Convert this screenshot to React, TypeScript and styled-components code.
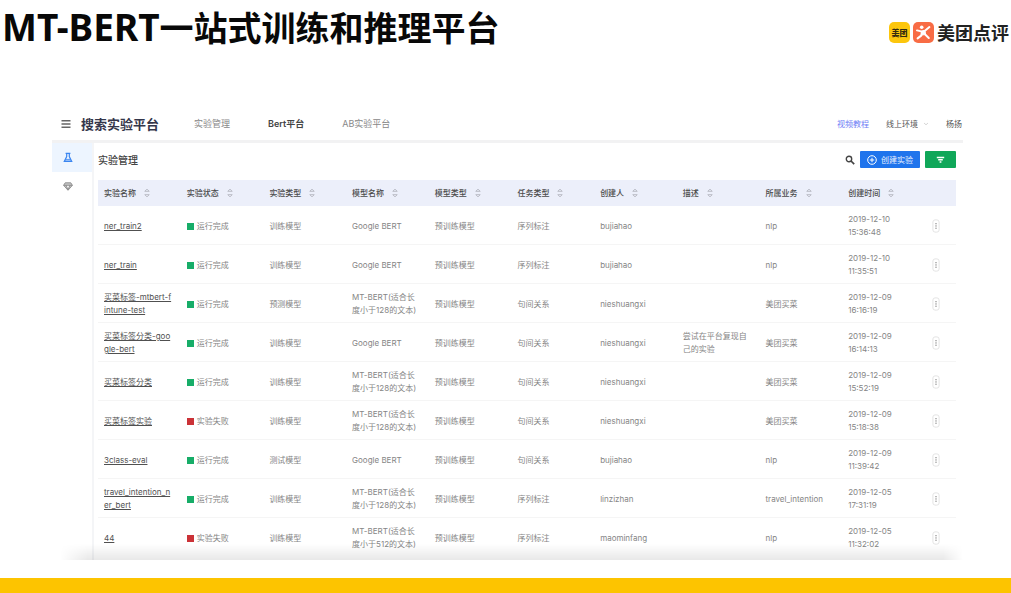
import React from "react";
import styled, { createGlobalStyle } from "styled-components";

const GlobalStyle = createGlobalStyle`
  *, *::before, *::after { box-sizing: border-box; }
  body { margin: 0; background: #fff; }
  a, button, select { font: inherit; color: inherit; }
  button { border: 0; padding: 0; background: none; cursor: pointer; }
`;

const Page = styled.div`
  display: flex;
  flex-direction: column;
  min-height: 100vh;
  font-family: Inter, "Noto Sans CJK SC", sans-serif;
`;

const SlideHeader = styled.header`
  display: flex;
  justify-content: space-between;
  align-items: flex-start;
  padding: 8px 2px 0 2px;
`;

const SlideTitle = styled.h1`
  margin: 0;
  font: 700 34px/40px "Noto Sans", "Noto Sans CJK SC", sans-serif;
  color: #080808;
  white-space: nowrap;
`;

const TitleLatin = styled.span`
  font-size: 37px;
  line-height: 34px;
`;

const Brand = styled.div`
  display: flex;
  align-items: center;
  gap: 3px;
  padding-top: 12px;
`;

const BrandBadge = styled.span<{ $color: string }>`
  display: flex;
  align-items: center;
  justify-content: center;
  width: 21px;
  height: 21px;
  border-radius: 5px;
  background: ${(p) => p.$color};
  color: #332a10;
  font: 900 8px/21px "Noto Sans CJK SC", sans-serif;
`;

const BrandName = styled.span`
  font: 700 18px/24px "Noto Sans CJK SC", sans-serif;
  color: #222;
`;

const Panel = styled.main`
  position: relative;
  margin: 57px 48px 18px 52px;
  &::after {
    content: "";
    position: absolute;
    left: 8px;
    right: 0;
    bottom: 0;
    height: 16px;
    pointer-events: none;
    background: linear-gradient(to bottom, rgba(0, 0, 0, 0), rgba(0, 0, 0, 0.09));
    mask-image: linear-gradient(to right, transparent, #000 28px, #000 calc(100% - 20px), transparent);
  }
`;

const TopBar = styled.header`
  display: flex;
  align-items: center;
  height: 38px;
  padding: 2px 1px 0 9px;
  border-bottom: 3px solid #f2f2f3;
`;

const MenuButton = styled.button`
  display: flex;
  margin-right: 10px;
  color: #666;
`;

const ProductName = styled.strong`
  font-size: 13px;
  line-height: 20px;
  font-weight: 700;
  color: #34364a;
`;

const Nav = styled.nav`
  display: flex;
  gap: 38px;
  margin-left: 35px;
`;

const NavLink = styled.a<{ $active?: boolean }>`
  font-size: 9px;
  line-height: 16px;
  font-weight: ${(p) => (p.$active ? 600 : 400)};
  color: ${(p) => (p.$active ? "#444" : "#888")};
  text-decoration: none;
`;

const Account = styled.div`
  display: flex;
  align-items: center;
  gap: 17px;
  margin-left: auto;
  font-size: 8px;
  line-height: 16px;
  color: #555;
`;

const TutorialLink = styled.a`
  color: #6d7cf5;
  text-decoration: none;
`;

const EnvPicker = styled.label`
  display: flex;
  align-items: center;
  gap: 5px;
`;

const EnvSelect = styled.select`
  appearance: none;
  border: 0;
  padding: 0;
  background: none;
`;

const Workspace = styled.div`
  display: flex;
`;

const Sidebar = styled.nav`
  width: 42px;
  flex: none;
  border-right: 2px solid #f4f5f7;
`;

const SideLink = styled.a<{ $active?: boolean }>`
  display: flex;
  align-items: center;
  justify-content: center;
  height: 29px;
  padding-right: 8px;
  background: ${(p) => (p.$active ? "#edf5ff" : "transparent")};
  color: ${(p) => (p.$active ? "#3b86f0" : "#8a8a8a")};
`;

const Content = styled.section`
  flex: 1;
  min-width: 0;
  padding: 0 7px 3px 4px;
`;

const Toolbar = styled.div`
  display: flex;
  align-items: center;
  height: 37px;
  padding-bottom: 4px;
`;

const SectionTitle = styled.h2`
  margin: 0 auto 0 0;
  font-size: 10px;
  line-height: 16px;
  font-weight: 500;
  color: #444;
`;

const SearchButton = styled.button`
  display: flex;
  margin-right: 5px;
  color: #444;
`;

const ActionButton = styled.button<{ $color: string; $width: number }>`
  display: flex;
  align-items: center;
  justify-content: center;
  gap: 4px;
  width: ${(p) => p.$width}px;
  height: 17px;
  border-radius: 1px;
  background: ${(p) => p.$color};
  color: #e8f1ff;
  font-size: 8px;
  line-height: 16px;
  & + & { margin-left: 5px; }
`;

const Table = styled.table`
  width: 100%;
  table-layout: fixed;
  border-collapse: separate;
  border-spacing: 0;
  font-size: 8px;
  line-height: 13px;
  color: #858585;
`;

const HeadCell = styled.th`
  height: 26px;
  padding: 0 0 0 6px;
  background: #eceffa;
  text-align: left;
  font-weight: 500;
  color: #4a4a4a;
`;

const ActionHead = styled(HeadCell)`
  width: 31px;
`;

const SortButton = styled.button`
  display: flex;
  align-items: center;
  gap: 8px;
`;

const Cell = styled.td`
  height: 39px;
  padding: 2px 0 0 6px;
  border-bottom: 1px solid #f5f5f5;
  white-space: pre;
  tr:last-child > & { border-bottom-color: transparent; }
`;

const NameLink = styled.a`
  color: #505050;
  text-decoration: underline;
`;

const Status = styled.span<{ $failed: boolean }>`
  display: flex;
  align-items: center;
  gap: 3px;
  &::before {
    content: "";
    width: 7px;
    height: 7px;
    background: ${(p) => (p.$failed ? "#cb3237" : "#17ad68")};
  }
`;

const MoreButton = styled.button`
  display: flex;
  margin-left: 1px;
`;

const FooterBar = styled.footer`
  height: 15px;
  margin-top: auto;
  background: #fdc400;
`;

const MenuIcon = () => (
  <svg width="10" height="10" viewBox="0 0 10 10" stroke="currentColor" strokeWidth="1.5">
    <path d="M.5 1.800h9M.5 5h9M.5 8.200h9" />
  </svg>
);

const FlaskIcon = () => (
  <svg width="10" height="11" viewBox="0 0 10 11" fill="none" stroke="currentColor" strokeWidth="1.2">
    <path d="M2.600 1.400h4.800M3.700 1.400v3.200L1.300 9.400h7.400L6.300 4.600V1.400" />
    <path d="M2.600 7.400h4.800L8.300 9.200H1.700Z" fill="currentColor" fillOpacity=".35" stroke="none" />
    <path d="M2.600 7.400h4.800" strokeWidth=".8" />
  </svg>
);

const GemIcon = () => (
  <svg width="10" height="9" viewBox="0 0 10 9" fill="#c4c4c4" stroke="currentColor" strokeWidth=".9" strokeLinejoin="round">
    <path d="M2.200.8h5.600L9.400 3.300 5 8.300.6 3.300ZM.6 3.300h8.800M3.200 3.300 5 8l1.800-4.700" />
  </svg>
);

const RunnerIcon = () => (
  <svg width="17" height="17" viewBox="0 0 17 17" fill="none" stroke="#fff" strokeWidth="2" strokeLinecap="round" strokeLinejoin="round">
    <circle cx="6.700" cy="3.200" r="1.800" fill="#fff" stroke="none" />
    <path d="M2 6.400 6.200 7.400 10 6.700l4.400-3.600M7.200 8.200l-1 3.400-3.600 2.800M9.600 7.800l.6 2.800 3.600 3.400" />
    <path d="M6.600 7.800 9.800 7.200 9.900 10.600 6.800 11Z" fill="#fff" strokeWidth="1" />
  </svg>
);

const CaretDown = () => (
  <svg width="6" height="4" viewBox="0 0 6 4" fill="none" stroke="#ccc" strokeWidth=".8">
    <path d="m1 1 2 1.800L5 1" />
  </svg>
);

const SearchIcon = () => (
  <svg width="10" height="10" viewBox="0 0 10 10" fill="none" stroke="currentColor" strokeWidth="1.400">
    <circle cx="4" cy="4" r="2.700" />
    <path d="m6 6 3.200 3.200" strokeWidth="1.700" />
  </svg>
);

const PlusIcon = () => (
  <svg width="10" height="10" viewBox="0 0 10 10" fill="none" stroke="#fff" strokeWidth="1">
    <circle cx="5" cy="5" r="4.300" />
    <path d="M5 2.800v4.400M2.800 5h4.400" />
  </svg>
);

const FilterIcon = () => (
  <svg width="9" height="8" viewBox="0 0 9 8" fill="none" stroke="#fff" strokeWidth="1.500">
    <path d="M.8 1.500h7.400M2.200 3.800h4.600M3.600 6.100h1.800" />
  </svg>
);

const SortIcon = () => (
  <svg width="6" height="10" viewBox="0 0 6 10" fill="none" stroke="#b4b6bf" strokeWidth=".9">
    <path d="M.8 3.300 3 1.100l2.200 2.200ZM.8 6.700 3 8.900l2.200-2.200Z" />
  </svg>
);

const MoreIcon = () => (
  <svg width="8" height="14" viewBox="0 0 8 14" fill="#777">
    <rect x=".9" y=".9" width="6.200" height="12.200" rx="2.200" fill="#fff" stroke="#ddd" strokeWidth=".8" />
    <rect x="3.500" y="4" width="1" height="1.300" />
    <rect x="3.500" y="6.300" width="1" height="1.300" />
    <rect x="3.500" y="8.600" width="1" height="1.300" />
  </svg>
);

const columns = ["实验名称", "实验状态", "实验类型", "模型名称", "模型类型", "任务类型", "创建人", "描述", "所属业务", "创建时间"];

const GOOGLE = "Google BERT";
const MT128 = "MT-BERT(适合长\n度小于128的文本)";
const MT512 = "MT-BERT(适合长\n度小于512的文本)";
const PRE = "预训练模型";

type Row = { name: string; failed?: boolean; cells: string[] };

const rows: Row[] = [
  { name: "ner_train2", cells: ["训练模型", GOOGLE, PRE, "序列标注", "bujiahao", "", "nlp", "2019-12-10\n15:36:48"] },
  { name: "ner_train", cells: ["训练模型", GOOGLE, PRE, "序列标注", "bujiahao", "", "nlp", "2019-12-10\n11:35:51"] },
  { name: "买菜标签-mtbert-f\nintune-test", cells: ["预测模型", MT128, PRE, "句间关系", "nieshuangxi", "", "美团买菜", "2019-12-09\n16:16:19"] },
  { name: "买菜标签分类-goo\ngle-bert", cells: ["训练模型", GOOGLE, PRE, "句间关系", "nieshuangxi", "尝试在平台复现自\n己的实验", "美团买菜", "2019-12-09\n16:14:13"] },
  { name: "买菜标签分类", cells: ["训练模型", MT128, PRE, "句间关系", "nieshuangxi", "", "美团买菜", "2019-12-09\n15:52:19"] },
  { name: "买菜标签实验", failed: true, cells: ["训练模型", MT128, PRE, "句间关系", "nieshuangxi", "", "美团买菜", "2019-12-09\n15:18:38"] },
  { name: "3class-eval", cells: ["测试模型", GOOGLE, PRE, "句间关系", "bujiahao", "", "nlp", "2019-12-09\n11:39:42"] },
  { name: "travel_intention_n\ner_bert", cells: ["训练模型", MT128, PRE, "序列标注", "linzizhan", "", "travel_intention", "2019-12-05\n17:31:19"] },
  { name: "44", failed: true, cells: ["训练模型", MT512, PRE, "序列标注", "maominfang", "", "nlp", "2019-12-05\n11:32:02"] },
];

export default function App() {
  return (
    <Page>
      <GlobalStyle />
      <SlideHeader>
        <SlideTitle>
          <TitleLatin>MT-BERT</TitleLatin>一站式训练和推理平台
        </SlideTitle>
        <Brand>
          <BrandBadge $color="#fcc60d">美团</BrandBadge>
          <BrandBadge $color="#f86c45">
            <RunnerIcon />
          </BrandBadge>
          <BrandName>美团点评</BrandName>
        </Brand>
      </SlideHeader>

      <Panel>
        <TopBar>
          <MenuButton aria-label="菜单">
            <MenuIcon />
          </MenuButton>
          <ProductName>搜索实验平台</ProductName>
          <Nav>
            <NavLink href="#manage">实验管理</NavLink>
            <NavLink href="#bert" $active>Bert平台</NavLink>
            <NavLink href="#ab">AB实验平台</NavLink>
          </Nav>
          <Account>
            <TutorialLink href="#video">视频教程</TutorialLink>
            <EnvPicker>
              <EnvSelect aria-label="环境">
                <option>线上环境</option>
              </EnvSelect>
              <CaretDown />
            </EnvPicker>
            <span>杨扬</span>
          </Account>
        </TopBar>

        <Workspace>
          <Sidebar>
            <SideLink href="#experiments" aria-label="实验" $active>
              <FlaskIcon />
            </SideLink>
            <SideLink href="#models" aria-label="模型">
              <GemIcon />
            </SideLink>
          </Sidebar>

          <Content>
            <Toolbar>
              <SectionTitle>实验管理</SectionTitle>
              <SearchButton aria-label="搜索">
                <SearchIcon />
              </SearchButton>
              <ActionButton $color="#1f74ec" $width={60}>
                <PlusIcon />
                创建实验
              </ActionButton>
              <ActionButton $color="#10a759" $width={31} aria-label="筛选">
                <FilterIcon />
              </ActionButton>
            </Toolbar>

            <Table>
              <thead>
                <tr>
                  {columns.map((label) => (
                    <HeadCell key={label}>
                      <SortButton>
                        {label}
                        <SortIcon />
                      </SortButton>
                    </HeadCell>
                  ))}
                  <ActionHead aria-label="操作" />
                </tr>
              </thead>
              <tbody>
                {rows.map((row) => (
                  <tr key={row.name}>
                    <Cell>
                      <NameLink href="#detail">{row.name}</NameLink>
                    </Cell>
                    <Cell>
                      <Status $failed={!!row.failed}>{row.failed ? "实验失败" : "运行完成"}</Status>
                    </Cell>
                    {row.cells.map((text, i) => (
                      <Cell key={i}>{text}</Cell>
                    ))}
                    <Cell>
                      <MoreButton aria-label="更多">
                        <MoreIcon />
                      </MoreButton>
                    </Cell>
                  </tr>
                ))}
              </tbody>
            </Table>
          </Content>
        </Workspace>
      </Panel>

      <FooterBar />
    </Page>
  );
}
